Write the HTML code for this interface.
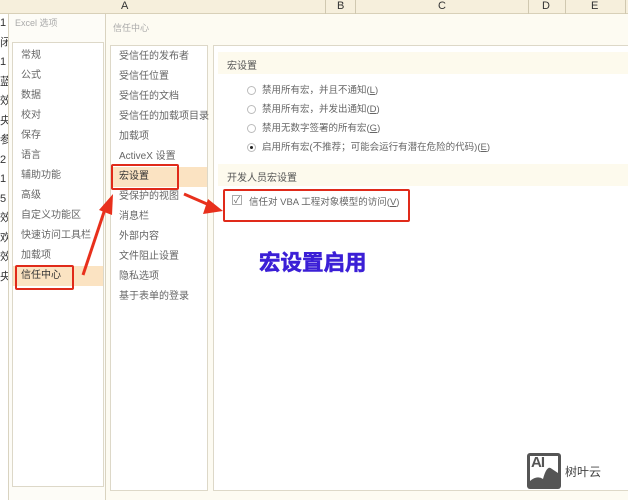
<!DOCTYPE html>
<html><head><meta charset="utf-8"><style>
*{margin:0;padding:0;box-sizing:border-box}
body{width:628px;height:500px;overflow:hidden;background:#fff;position:relative;font-family:"Liberation Sans","Noto Sans CJK SC",sans-serif;font-size:10px;color:#555}
.a{position:absolute;white-space:nowrap}
.hdr{left:0;top:0;width:628px;height:14px;background:#f6efdc;border-bottom:1px solid #d8d0b8}
.col{top:0;font-size:11px;color:#333}
.sep{top:0;width:1px;height:14px;background:#d0c8b0}
.dlg{left:8px;top:14px;width:620px;height:486px;background:#fdfcf7;border-left:1px solid #d9d3c0}
.lp{left:12px;top:42px;width:92px;height:445px;background:#fff;border:1px solid #ddd8c8}
.tc{left:105px;top:14px;width:523px;height:486px;background:#fdfbf2;border-left:1px solid #d9d3c0}
.np{left:110px;top:45px;width:98px;height:446px;background:#fff;border:1px solid #ddd8c8}
.cp{left:213px;top:45px;width:415px;height:446px;background:#fff;border:1px solid #ddd8c8;border-right:none}
.it{font-size:10px;color:#666}
.band{background:#fdfaed;height:22px}
.rad{width:9px;height:9px;border:1px solid #bbb;border-radius:50%;background:#fff}
.red{border:2px solid #e02a1a;border-radius:2px}
</style></head><body>
<div class="a hdr"></div>
<div class="a col" style="left:121px">A</div>
<div class="a sep" style="left:325px"></div><div class="a col" style="left:337px">B</div>
<div class="a sep" style="left:355px"></div><div class="a col" style="left:438px">C</div>
<div class="a sep" style="left:528px"></div><div class="a col" style="left:542px">D</div>
<div class="a sep" style="left:565px"></div><div class="a col" style="left:591px">E</div>
<div class="a sep" style="left:625px"></div>
<div class="a" style="left:0;top:14px;width:8px;height:486px;background:#fff;font-size:11px;color:#333;line-height:19.5px;overflow:hidden">1<br>闭<br>1<br>蓝<br>效<br>央<br>参<br>2<br>1<br>5<br>效<br>欢<br>效<br>央</div>
<div class="a dlg"></div>
<div class="a" style="left:15px;top:16px;color:#aaa;font-size:9px">Excel 选项</div>
<div class="a lp"></div>
<div class="a" style="left:13px;top:266px;width:90px;height:20px;background:#fbe3c2"></div>
<div class="a it" style="left:21px;top:46px;line-height:20px">常规<br>公式<br>数据<br>校对<br>保存<br>语言<br>辅助功能<br>高级<br>自定义功能区<br>快速访问工具栏<br>加载项<br><span style="color:#333">信任中心</span></div>
<div class="a tc"></div>
<div class="a" style="left:113px;top:21px;color:#aaa;font-size:9px">信任中心</div>
<div class="a np"></div>
<div class="a" style="left:111px;top:167px;width:96px;height:20px;background:#fbe3c2"></div>
<div class="a it" style="left:119px;top:47px;line-height:20px">受信任的发布者<br>受信任位置<br>受信任的文档<br>受信任的加载项目录<br>加载项<br>ActiveX 设置<br><span style="color:#333">宏设置</span><br>受保护的视图<br>消息栏<br>外部内容<br>文件阻止设置<br>隐私选项<br>基于表单的登录</div>
<div class="a cp"></div>
<div class="a band" style="left:218px;top:52px;width:410px"></div>
<div class="a" style="left:227px;top:57px;color:#555">宏设置</div>
<div class="a rad" style="left:247px;top:86px"></div>
<div class="a rad" style="left:247px;top:105px"></div>
<div class="a rad" style="left:247px;top:124px"></div>
<div class="a rad" style="left:247px;top:143px"></div>
<div class="a" style="left:250px;top:146px;width:3px;height:3px;border-radius:50%;background:#222"></div>
<div class="a it" style="left:262px;top:81px;line-height:19px;font-size:9.5px">禁用所有宏，并且不通知(<u>L</u>)<br>禁用所有宏，并发出通知(<u>D</u>)<br>禁用无数字签署的所有宏(<u>G</u>)<br>启用所有宏(不推荐；可能会运行有潜在危险的代码)(<u>E</u>)</div>
<div class="a band" style="left:218px;top:164px;width:410px"></div>
<div class="a" style="left:227px;top:169px;color:#555">开发人员宏设置</div>
<div class="a" style="left:232px;top:195px;width:10px;height:10px;border:1px solid #aaa;font-size:9px;line-height:8px;text-align:center;color:#666">✓</div>
<div class="a it" style="left:249px;top:194px;font-size:9.5px">信任对 VBA 工程对象模型的访问(<u>V</u>)</div>
<div class="a red" style="left:223px;top:189px;width:187px;height:33px"></div>
<div class="a red" style="left:15px;top:265px;width:59px;height:25px"></div>
<div class="a red" style="left:111px;top:164px;width:68px;height:26px"></div>
<div class="a" style="left:259px;top:246px;font-size:21.5px;font-weight:bold;color:#3b1fd6;-webkit-text-stroke:0.6px #3b1fd6">宏设置启用</div>
<svg class="a" style="left:0;top:0" width="628" height="500">
<path d="M83 275 L106 206" stroke="#e8301c" stroke-width="3" fill="none"/>
<polygon points="113,194 112,215 99,210" fill="#e8301c"/>
<path d="M184 194 L207 204" stroke="#e8301c" stroke-width="3" fill="none"/>
<polygon points="223,211 203,214 208,199" fill="#e8301c"/>
</svg>
<div class="a" style="left:527px;top:453px;width:34px;height:36px;background:#555;border-radius:3px"></div>
<div class="a" style="left:530px;top:456px;width:28px;height:30px;background:#fff"></div>
<div class="a" style="left:531px;top:454px;font-size:15px;font-weight:bold;color:#555;letter-spacing:-1px">AI</div>
<svg class="a" style="left:530px;top:456px" width="28" height="30"><path d="M0 25 Q7 19 13 23 Q17 8 22 13 L28 17 L28 30 L0 30Z" fill="#555"/></svg>
<div class="a" style="left:565px;top:463px;font-size:12px;color:#444">树叶云</div>
</body></html>
